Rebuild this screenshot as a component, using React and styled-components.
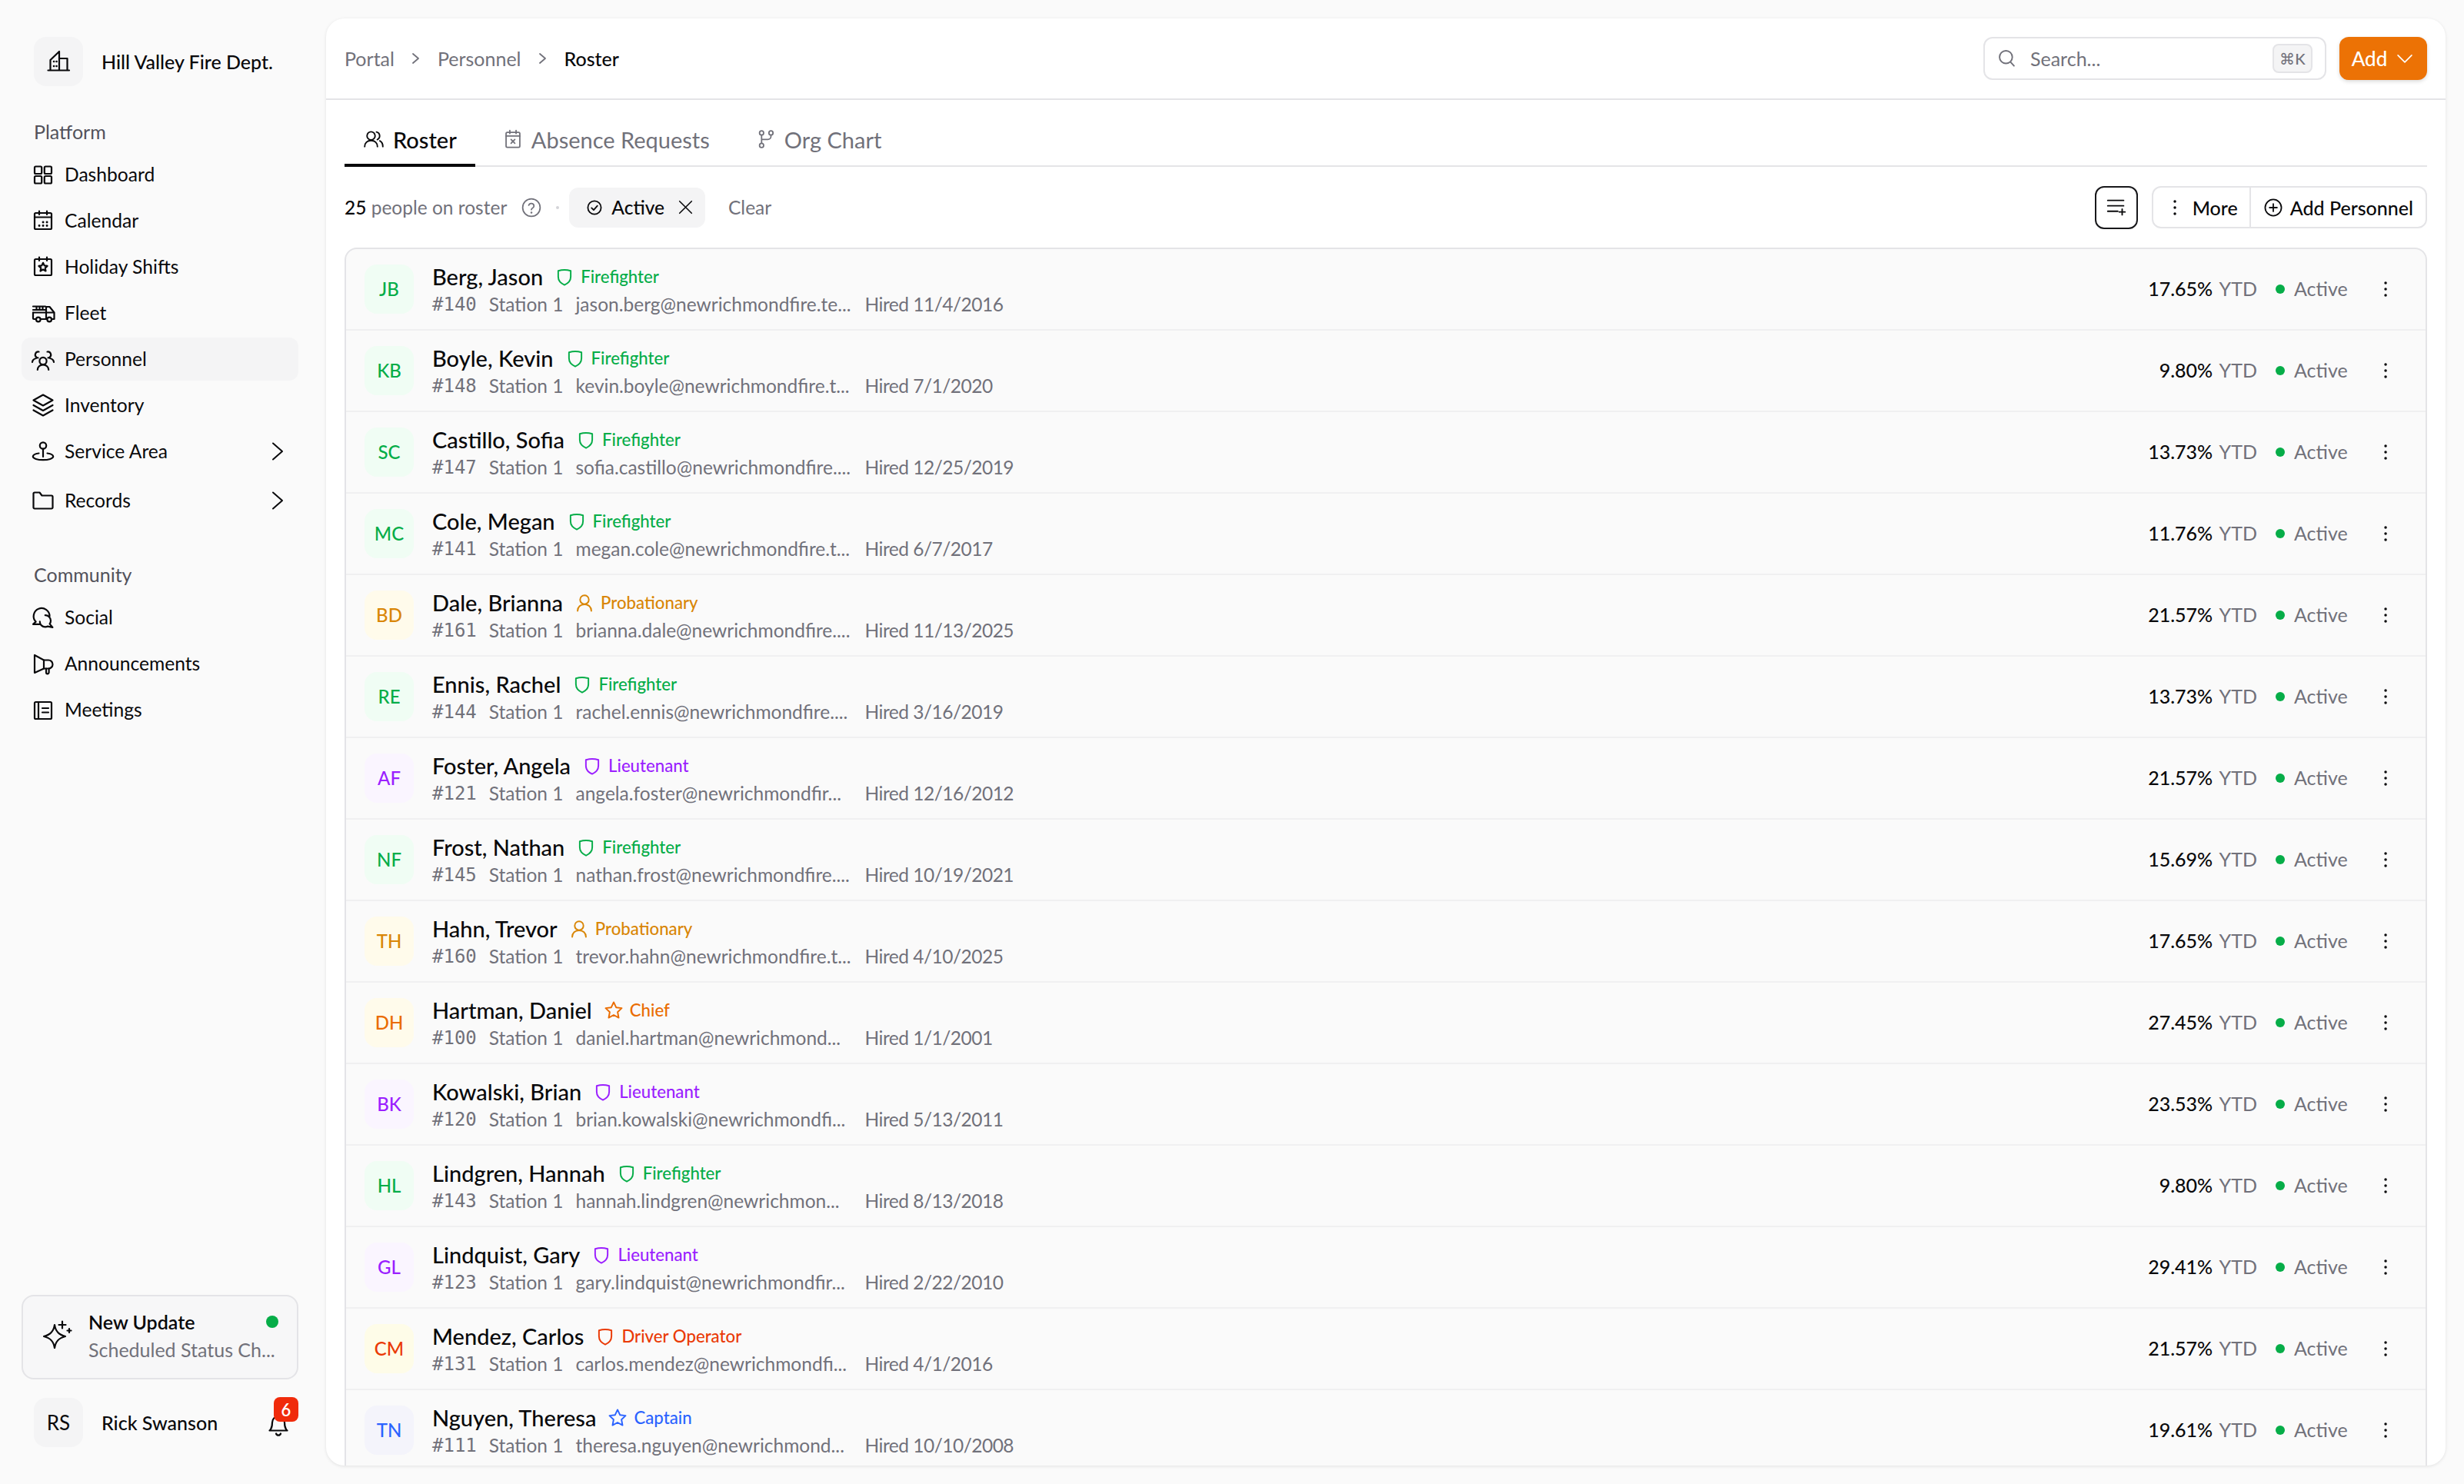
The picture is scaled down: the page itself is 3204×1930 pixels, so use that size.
import React from "react";
import styled, { createGlobalStyle } from "styled-components";

const FONT = `"Lato", "Noto Sans", "Liberation Sans", sans-serif`;

const Global = createGlobalStyle`
  * { box-sizing: border-box; }
  html, body { margin: 0; padding: 0; background: #fafafa; }
  body { font-family: ${FONT}; color: #09090b; }
`;

const Ico = styled.svg.attrs((p) => ({
  viewBox: `0 0 ${p.$box || 32} ${p.$box || 32}`,
  fill: "none",
  stroke: "currentColor",
  strokeWidth: p.$sw || 2.2,
  strokeLinecap: "round",
  strokeLinejoin: "round",
}))`
  width: ${(p) => p.$size || p.$box || 32}px;
  height: ${(p) => p.$size || p.$box || 32}px;
  flex: none;
  display: block;
  color: ${(p) => p.$color || "currentColor"};
`;

const I = {
  brand: <><path d="M2.5 27.5H30" /><path d="M5.5 27V14L17 3v24" /><path d="M17 12h10.5v15" /><path d="M10 16h.1M13.5 16h.1M10 22h.1M13.5 22h.1" strokeWidth="2.6" /></>,
  dash: <><rect x="5" y="5.5" width="9.2" height="9.5" rx="1.5" /><rect x="17.8" y="5.5" width="9.2" height="9.5" rx="1.5" /><rect x="5" y="18" width="9.2" height="9.5" rx="1.5" /><rect x="17.8" y="18" width="9.2" height="9.5" rx="1.5" /></>,
  cal: <><rect x="5" y="6" width="22" height="21" rx="1.5" /><path d="M11 3.5V8M21 3.5V8M5 11.5h22" /><path d="M16 18h.1M21 18h.1M11 22.5h.1M16 22.5h.1M21 22.5h.1" strokeWidth="2.8" /></>,
  holiday: <><rect x="5" y="6" width="22" height="21" rx="1.5" /><path d="M11 3.5V8M21 3.5V8" /><path d="M16 10.8l1.7 3.6 3.9.5-2.9 2.7.8 3.9-3.5-2-3.5 2 .8-3.9-2.9-2.7 3.9-.5z" /></>,
  fleet: <><path d="M3 7.5h16M3 12h16M7.5 7.5V12M11.5 7.5V12M15.5 7.5V12" /><path d="M20 24V8h4.5l6 7.5V24h-2.5" /><path d="M21 15.5h9" /><path d="M3 15.5h17" /><path d="M3 15.5V23a1 1 0 0 0 1 1h2.5M13 24h8" /><circle cx="9.8" cy="24.5" r="2.8" /><circle cx="24.2" cy="24.5" r="2.8" /></>,
  people: <><circle cx="16" cy="18.5" r="4.6" /><path d="M8.8 30c0-4 3.2-6.6 7.2-6.6s7.2 2.6 7.2 6.6" /><path d="M10.5 6.5a4 4 0 0 0-3 7.2c.7.4 1.2.6 2 .7" /><path d="M7 15c-2.8.7-4.8 2.6-5 5" /><path d="M21.5 6.5a4 4 0 0 1 3 7.2c-.7.4-1.2.6-2 .7" /><path d="M25 15c2.8.7 4.8 2.6 5 5" /></>,
  layers: <><path d="M16 2.5 28.5 9.5 16 16.5 3.5 9.5z" /><path d="M3.5 16 16 23l12.5-7" /><path d="M3.5 22.5 16 29.5l12.5-7" /></>,
  area: <><circle cx="16" cy="8.5" r="4.2" /><path d="M16 12.7V23" /><path d="M10.5 18.5C5.5 19.3 2.8 21 2.8 22.8c0 2.5 6 4.4 13.2 4.4s13.2-1.9 13.2-4.4c0-1.8-2.7-3.5-7.7-4.3" /></>,
  folder: <path d="M3.5 25V7A1.5 1.5 0 0 1 5 5.500h6.500l3 4H27a1.500 1.500 0 0 1 1.500 1.500v14a1.500 1.500 0 0 1-1.500 1.500H5A1.500 1.500 0 0 1 3.500 25z" />,
  social: <><path d="M24.500 14.500A10.400 10.400 0 1 0 6.600 21.600L3 24.800h8.500" /><path d="M18.800 13.200a7 7 0 0 1 7.200 7c0 1.600-.5 3-1.400 4.200l3.800 4.600-6.200-1.400c-1 .5-2.300.8-3.400.8a7 7 0 0 1-7-7" /></>,
  mega: <><path d="M5 5v23l12-5.500h6a5 5 0 0 0 0-11h-6z" /><path d="M17 11.500v11M20 22.500v5a1.800 1.800 0 0 0 3.600 0v-5" /></>,
  notes: <><rect x="5" y="6" width="22" height="22" rx="1.500" /><path d="M10 6v22M15 14h8M15 19.500h8" /></>,
  chevNav: <path d="M6 1.500 18 12 6 22.500" />,
  chevCrumb: <path d="M3 1 10 7 3 13" />,
  spark: <><path d="M16 6c1.200 8.500 5.200 12.800 14 15-8.800 2.200-12.800 6.500-14 15-1.200-8.500-5.200-12.800-14-15 8.800-2.200 12.800-6.500 14-15z" /><path d="M26 1.500v9M21.500 6h9" /><path d="M35 11v5M32.500 13.500h5" /></>,
  bell: <><path d="M8 13a8 8 0 0 1 16 0c0 8 3.500 10.500 3.500 10.500h-23S8 21 8 13z" /><path d="M13 27.500a3.200 3.200 0 0 0 6 0" /></>,
  search: <><circle cx="13" cy="14" r="9.500" /><path d="m20 21.500 5 5.500" /></>,
  down: <path d="M5 11l11 11 11-11" />,
  usersTab: <><circle cx="12" cy="11" r="6" /><path d="M2.500 27c0-5.500 4-9 9.500-9s9.500 3.500 9.500 9" /><path d="M20 5.300a6 6 0 0 1 1.300 11.300" /><path d="M25 18.500c2.800 1.500 4.500 4.500 4.500 8.500" /></>,
  calX: <><rect x="5" y="5" width="22" height="24" rx="2" /><path d="M11 2v5M21 2v5M5 11h22M13 16.500l6 6M19 16.500l-6 6" /></>,
  branch: <><circle cx="9" cy="6" r="3.300" /><circle cx="9" cy="26" r="3.300" /><circle cx="24" cy="6" r="3.300" /><path d="M9 9.500v13M24 9.500v2a5 5 0 0 1-5 5H9" /></>,
  help: <><circle cx="16" cy="16" r="13" /><path d="M12 12.500a4 4 0 0 1 7.800 1.200c0 2.700-3.800 3.300-3.800 5.300" /><path d="M16 23.500h.1" strokeWidth="2.800" /></>,
  check: <><circle cx="16" cy="16" r="12.500" /><path d="m10.500 16.500 4 4 7-8" /></>,
  x: <path d="M6 6l20 20M26 6 6 26" />,
  vdots: <path d="M16 8h.1M16 16h.1M16 24h.1" strokeWidth="3.400" />,
  plusCircle: <><circle cx="16" cy="16" r="13" /><path d="M16 10v12M10 16h12" /></>,
  filter: <path d="M4 6h22M4 13.500h22M4 21h14M24 18v8M20 22h8" />,
  shield: <path d="M6 6.500Q16 3.500 26 6.500V16C26 23 20.500 27 16 29 11.500 27 6 23 6 16z" />,
  star: <path d="m16 3 3.900 8.300 9 1.200-6.600 6.300 1.700 9L16 23.400 8 27.800l1.700-9-6.600-6.300 9-1.200z" />,
  user: <><circle cx="16" cy="11" r="7" /><path d="M5 29c0-6.500 4.800-10.500 11-10.500S27 22.500 27 29" /></>,
};

const Shell = styled.div`
  display: flex;
  width: 3204px;
  height: 1930px;
  overflow: hidden;
  background: #fafafa;
  padding: 24px 24px 24px 0;
`;

const Sidebar = styled.aside`
  width: 424px;
  flex: none;
  display: flex;
  flex-direction: column;
  padding: 24px 36px 0 28px;
`;

const Tile = styled.div`
  width: 64px;
  height: 64px;
  border-radius: 16px;
  background: #f4f4f5;
  display: flex;
  align-items: center;
  justify-content: center;
  flex: none;
  font-size: 26px;
`;

const Brand = styled.div`
  display: flex;
  align-items: center;
  gap: 24px;
  padding-left: 16px;
  font-size: 25px;
  font-weight: 500;
`;

const NavHead = styled.div`
  color: #52525b;
  font-size: 25px;
  padding-left: 16px;
  line-height: 36px;
  margin-top: ${(p) => p.$top}px;
  margin-bottom: 10px;
`;

const NavList = styled.div`
  display: flex;
  flex-direction: column;
  gap: 4px;
`;

const NavItem = styled.div`
  height: 56px;
  display: flex;
  align-items: center;
  gap: 12px;
  padding: 0 15px 0 12px;
  border-radius: 12px;
  font-size: 24.6px;
  background: ${(p) => (p.$active ? "#f4f4f5" : "transparent")};
  margin-top: ${(p) => p.$top || 0}px;
  span { flex: 1; padding-bottom: 2px; }
`;

const Spacer = styled.div`
  flex: 1;
`;

const UpdateCard = styled.div`
  height: 110px;
  border: 2px solid #e4e4e7;
  border-radius: 16px;
  background: #f7f7f8;
  display: flex;
  align-items: center;
  gap: 20px;
  padding: 0 24px 4px 25px;
`;

const UpdateText = styled.div`
  flex: 1;
  min-width: 0;
  display: flex;
  flex-direction: column;
  gap: 4px;
`;

const UpdateTitle = styled.div`
  font-size: 25px;
  font-weight: 600;
  line-height: 32px;
  display: flex;
  align-items: center;
  justify-content: space-between;
`;

const GreenDot = styled.i`
  width: ${(p) => p.$size}px;
  height: ${(p) => p.$size}px;
  border-radius: 50%;
  background: #06ad48;
  flex: none;
  display: block;
`;

const UpdateSub = styled.div`
  font-size: 25px;
  line-height: 32px;
  color: #71717a;
  white-space: nowrap;
`;

const UserRow = styled.div`
  display: flex;
  align-items: center;
  gap: 24px;
  padding: 0 0 0 16px;
  margin: 24px 0 24px;
  height: 64px;
`;

const UserName = styled.div`
  flex: 1;
  font-size: 25px;
  font-weight: 500;
`;

const BellWrap = styled.div`
  position: relative;
  width: 32px;
  height: 32px;
  margin-right: 10px;
  margin-top: 6px;
`;

const Badge = styled.div`
  position: absolute;
  left: 10px;
  top: -20px;
  width: 32px;
  height: 32px;
  background: #f02b0b;
  color: #fff;
  border-radius: 8px;
  font-size: 22px;
  font-weight: 600;
  display: flex;
  align-items: center;
  justify-content: center;
`;

const Panel = styled.main`
  flex: 1;
  min-width: 0;
  background: #fff;
  border-radius: 24px;
  box-shadow: 0 1px 4px rgba(0, 0, 0, 0.1);
  overflow: hidden;
  display: flex;
  flex-direction: column;
`;

const Header = styled.header`
  height: 106px;
  flex: none;
  border-bottom: 2px solid #e4e4e7;
  display: flex;
  align-items: center;
  justify-content: space-between;
  padding: 0 24px;
`;

const Crumbs = styled.nav`
  display: flex;
  align-items: center;
  gap: 21px;
  font-size: 25px;
`;

const Crumb = styled.span`
  color: ${(p) => (p.$current ? "#09090b" : "#71717a")};
  font-weight: ${(p) => (p.$current ? 500 : 400)};
`;

const CrumbChev = styled(Ico)`
  color: #71717a;
`;

const HeaderRight = styled.div`
  display: flex;
  align-items: center;
  gap: 17px;
`;

const Search = styled.div`
  width: 446px;
  height: 56px;
  border: 2px solid #e4e4e7;
  border-radius: 12px;
  display: flex;
  align-items: center;
  gap: 15px;
  padding: 0 16px;
  color: #71717a;
  font-size: 25px;
  span { flex: 1; }
`;

const Kbd = styled.kbd`
  width: 52px;
  height: 38px;
  border: 2px solid #e4e4e7;
  border-radius: 8px;
  background: #f4f4f5;
  font-family: ${FONT};
  font-size: 20px;
  font-weight: 500;
  color: #71717a;
  display: flex;
  align-items: center;
  justify-content: center;
`;

const AddBtn = styled.button`
  width: 114px;
  height: 56px;
  border: none;
  border-radius: 12px;
  background: #ec7205;
  color: #fff;
  font-family: ${FONT};
  font-size: 26px;
  font-weight: 500;
  display: flex;
  align-items: center;
  justify-content: center;
  gap: 10px;
  box-shadow: 0 2px 5px rgba(0, 0, 0, 0.15);
`;

const Content = styled.div`
  padding: 0 24px;
  flex: 1;
  min-height: 0;
  display: flex;
  flex-direction: column;
`;

const Tabs = styled.div`
  height: 87px;
  flex: none;
  display: flex;
  align-items: stretch;
  gap: 12px;
  border-bottom: 2px solid #e4e4e7;
`;

const Tab = styled.div`
  display: flex;
  align-items: center;
  gap: 11px;
  padding: 19px 24px 0;
  font-size: 29px;
  color: ${(p) => (p.$active ? "#09090b" : "#71717a")};
  font-weight: ${(p) => (p.$active ? 500 : 400)};
  border-bottom: 4px solid ${(p) => (p.$active ? "#09090b" : "transparent")};
  margin-bottom: -2px;
`;

const Toolbar = styled.div`
  height: 105px;
  flex: none;
  display: flex;
  align-items: center;
  justify-content: space-between;
`;

const ToolLeft = styled.div`
  display: flex;
  align-items: center;
  font-size: 24.5px;
  color: #71717a;
`;

const Count = styled.span`
  b {
    color: #09090b;
    font-weight: 500;
  }
`;

const Sep = styled.span`
  width: 4px;
  height: 4px;
  border-radius: 50%;
  background: #d4d4d8;
  margin: 0 13px 0 18px;
`;

const HelpWrap = styled.span`
  margin-left: 18px;
  display: flex;
`;

const Chip = styled.div`
  height: 52px;
  padding: 0 13px 0 22px;
  border-radius: 12px;
  background: #f4f4f5;
  color: #09090b;
  display: flex;
  align-items: center;
  gap: 11px;
  font-weight: 500;
`;

const ChipClose = styled.span`
  margin-left: 4px;
  display: flex;
`;

const ClearLink = styled.span`
  margin-left: 30px;
`;

const ToolRight = styled.div`
  display: flex;
  align-items: center;
  gap: 18px;
`;

const IconBtn = styled.div`
  width: 56px;
  height: 56px;
  border: 2px solid #18181b;
  border-radius: 12px;
  display: flex;
  align-items: center;
  justify-content: center;
`;

const BtnGroup = styled.div`
  height: 55px;
  border: 2px solid #e4e4e7;
  border-radius: 12px;
  display: flex;
  font-size: 25px;
  font-weight: 500;
`;

const GroupBtn = styled.div`
  display: flex;
  align-items: center;
  gap: ${(p) => p.$gap}px;
  padding: ${(p) => p.$pad};
  & + & {
    border-left: 2px solid #e4e4e7;
  }
`;

const List = styled.div`
  border: 2px solid #e4e4e7;
  border-bottom: none;
  border-radius: 16px 16px 0 0;
  background: #fafafa;
`;

const Row = styled.div`
  height: 106px;
  display: flex;
  align-items: center;
  padding: 0 0 0 24px;
  border-bottom: 2px solid #f0f0f1;
  gap: 24px;
`;

const Avatar = styled(Tile)`
  background: ${(p) => p.$bg};
  color: ${(p) => p.$fg};
  font-size: 24px;
  font-weight: 500;
  padding-bottom: 2px;
`;

const Person = styled.div`
  flex: 1;
  min-width: 0;
  display: flex;
  flex-direction: column;
  padding-top: 3px;
`;

const NameLine = styled.div`
  display: flex;
  align-items: center;
  gap: 15px;
  height: 36px;
  line-height: 36px;
  font-size: 29px;
  font-weight: 500;
`;

const Role = styled.span`
  display: flex;
  align-items: center;
  gap: 8px;
  font-size: 22.2px;
  font-weight: 500;
  color: ${(p) => p.$fg};
`;

const Meta = styled.div`
  display: flex;
  align-items: center;
  gap: 16px;
  height: 36px;
  line-height: 36px;
  font-size: 24.5px;
  color: #71717a;
`;

const MonoId = styled.span`
  font-family: "DejaVu Sans Mono", "Liberation Mono", monospace;
  font-size: 24px;
`;

const Email = styled.span`
  width: 360px;
  white-space: nowrap;
`;

const Hired = styled.span`
  letter-spacing: -0.5px;
`;

const Stat = styled.div`
  width: 180px;
  text-align: right;
  font-size: 25px;
  color: #71717a;
  padding-bottom: 2px;
  b {
    font-weight: 500;
    color: #09090b;
    margin-right: 3px;
  }
`;

const Status = styled.div`
  display: flex;
  align-items: center;
  gap: 12px;
  font-size: 25px;
  color: #71717a;
  width: 103px;
  span { padding-bottom: 2px; }
`;

const RowMenu = styled.div`
  width: 32px;
  margin: 0 36px 0 0;
`;

const palette = {
  Firefighter: { fg: "#06ad48", bg: "#f0fdf4", icon: "shield" },
  Probationary: { fg: "#d98606", bg: "#fffbeb", icon: "user" },
  Lieutenant: { fg: "#9b1fff", bg: "#faf5ff", icon: "shield" },
  Chief: { fg: "#ea6c00", bg: "#fffbeb", icon: "star" },
  "Driver Operator": { fg: "#ea3a06", bg: "#fefce8", icon: "shield" },
  Captain: { fg: "#2b63ff", bg: "#f4f4fb", icon: "star" },
};

const people = [
  ["JB", "Berg, Jason", "Firefighter", "#140", "jason.berg@newrichmondfire.te...", "11/4/2016", "17.65%"],
  ["KB", "Boyle, Kevin", "Firefighter", "#148", "kevin.boyle@newrichmondfire.t...", "7/1/2020", "9.80%"],
  ["SC", "Castillo, Sofia", "Firefighter", "#147", "sofia.castillo@newrichmondfire....", "12/25/2019", "13.73%"],
  ["MC", "Cole, Megan", "Firefighter", "#141", "megan.cole@newrichmondfire.t...", "6/7/2017", "11.76%"],
  ["BD", "Dale, Brianna", "Probationary", "#161", "brianna.dale@newrichmondfire....", "11/13/2025", "21.57%"],
  ["RE", "Ennis, Rachel", "Firefighter", "#144", "rachel.ennis@newrichmondfire....", "3/16/2019", "13.73%"],
  ["AF", "Foster, Angela", "Lieutenant", "#121", "angela.foster@newrichmondfir...", "12/16/2012", "21.57%"],
  ["NF", "Frost, Nathan", "Firefighter", "#145", "nathan.frost@newrichmondfire....", "10/19/2021", "15.69%"],
  ["TH", "Hahn, Trevor", "Probationary", "#160", "trevor.hahn@newrichmondfire.t...", "4/10/2025", "17.65%"],
  ["DH", "Hartman, Daniel", "Chief", "#100", "daniel.hartman@newrichmond...", "1/1/2001", "27.45%"],
  ["BK", "Kowalski, Brian", "Lieutenant", "#120", "brian.kowalski@newrichmondfi...", "5/13/2011", "23.53%"],
  ["HL", "Lindgren, Hannah", "Firefighter", "#143", "hannah.lindgren@newrichmon...", "8/13/2018", "9.80%"],
  ["GL", "Lindquist, Gary", "Lieutenant", "#123", "gary.lindquist@newrichmondfir...", "2/22/2010", "29.41%"],
  ["CM", "Mendez, Carlos", "Driver Operator", "#131", "carlos.mendez@newrichmondfi...", "4/1/2016", "21.57%"],
  ["TN", "Nguyen, Theresa", "Captain", "#111", "theresa.nguyen@newrichmond...", "10/10/2008", "19.61%"],
];

function Nav({ icon, label, active, chevron, top }) {
  return (
    <NavItem $active={active} $top={top}>
      <Ico>{I[icon]}</Ico>
      <span>{label}</span>
      {chevron && <Ico $box={24} $sw={2}>{I.chevNav}</Ico>}
    </NavItem>
  );
}

function PersonRow({ p }) {
  const [ini, name, role, id, email, hired, pct] = p;
  const c = palette[role];
  return (
    <Row>
      <Avatar $bg={c.bg} $fg={c.fg}>{ini}</Avatar>
      <Person>
        <NameLine>
          {name}
          <Role $fg={c.fg}>
            <Ico $size={26} $sw={2.4}>{I[c.icon]}</Ico>
            {role}
          </Role>
        </NameLine>
        <Meta>
          <MonoId>{id}</MonoId>
          <span>Station 1</span>
          <Email>{email}</Email>
          <Hired>Hired {hired}</Hired>
        </Meta>
      </Person>
      <Stat><b>{pct}</b> YTD</Stat>
      <Status><GreenDot $size={12} /><span>Active</span></Status>
      <RowMenu><Ico>{I.vdots}</Ico></RowMenu>
    </Row>
  );
}

export default function App() {
  return (
    <>
      <Global />
      <Shell>
        <Sidebar>
          <Brand>
            <Tile><Ico>{I.brand}</Ico></Tile>
            Hill Valley Fire Dept.
          </Brand>
          <NavHead $top={41}>Platform</NavHead>
          <NavList>
            <Nav icon="dash" label="Dashboard" />
            <Nav icon="cal" label="Calendar" />
            <Nav icon="holiday" label="Holiday Shifts" />
            <Nav icon="fleet" label="Fleet" />
            <Nav icon="people" label="Personnel" active />
            <Nav icon="layers" label="Inventory" />
            <Nav icon="area" label="Service Area" chevron />
            <Nav icon="folder" label="Records" chevron top={4} />
          </NavList>
          <NavHead $top={50}>Community</NavHead>
          <NavList>
            <Nav icon="social" label="Social" />
            <Nav icon="mega" label="Announcements" />
            <Nav icon="notes" label="Meetings" />
          </NavList>
          <Spacer />
          <UpdateCard>
            <Ico $box={40}>{I.spark}</Ico>
            <UpdateText>
              <UpdateTitle>New Update<GreenDot $size={16} /></UpdateTitle>
              <UpdateSub>Scheduled Status Ch...</UpdateSub>
            </UpdateText>
          </UpdateCard>
          <UserRow>
            <Tile>RS</Tile>
            <UserName>Rick Swanson</UserName>
            <BellWrap>
              <Ico>{I.bell}</Ico>
              <Badge>6</Badge>
            </BellWrap>
          </UserRow>
        </Sidebar>
        <Panel>
          <Header>
            <Crumbs>
              <Crumb>Portal</Crumb>
              <CrumbChev $box={14} $sw={1.8}>{I.chevCrumb}</CrumbChev>
              <Crumb>Personnel</Crumb>
              <CrumbChev $box={14} $sw={1.8}>{I.chevCrumb}</CrumbChev>
              <Crumb $current>Roster</Crumb>
            </Crumbs>
            <HeaderRight>
              <Search>
                <Ico $size={28}>{I.search}</Ico>
                <span>Search...</span>
                <Kbd>⌘K</Kbd>
              </Search>
              <AddBtn>
                Add
                <Ico $size={26} $sw={2}>{I.down}</Ico>
              </AddBtn>
            </HeaderRight>
          </Header>
          <Content>
            <Tabs>
              <Tab $active><Ico $size={28}>{I.usersTab}</Ico>Roster</Tab>
              <Tab><Ico $size={26}>{I.calX}</Ico>Absence Requests</Tab>
              <Tab><Ico $size={26}>{I.branch}</Ico>Org Chart</Tab>
            </Tabs>
            <Toolbar>
              <ToolLeft>
                <Count><b>25</b> people on roster</Count>
                <HelpWrap><Ico $size={28} $sw={2}>{I.help}</Ico></HelpWrap>
                <Sep />
                <Chip>
                  <Ico $size={22} $sw={2.6}>{I.check}</Ico>
                  Active
                  <ChipClose><Ico $size={25} $sw={2}>{I.x}</Ico></ChipClose>
                </Chip>
                <ClearLink>Clear</ClearLink>
              </ToolLeft>
              <ToolRight>
                <IconBtn><Ico $size={30} $sw={2}>{I.filter}</Ico></IconBtn>
                <BtnGroup>
                  <GroupBtn $gap={7} $pad="0 15px 0 12px"><Ico>{I.vdots}</Ico>More</GroupBtn>
                  <GroupBtn $gap={9} $pad="0 16px 0 16px"><Ico $size={26}>{I.plusCircle}</Ico>Add Personnel</GroupBtn>
                </BtnGroup>
              </ToolRight>
            </Toolbar>
            <List>
              {people.map((p) => <PersonRow key={p[4]} p={p} />)}
            </List>
          </Content>
        </Panel>
      </Shell>
    </>
  );
}
